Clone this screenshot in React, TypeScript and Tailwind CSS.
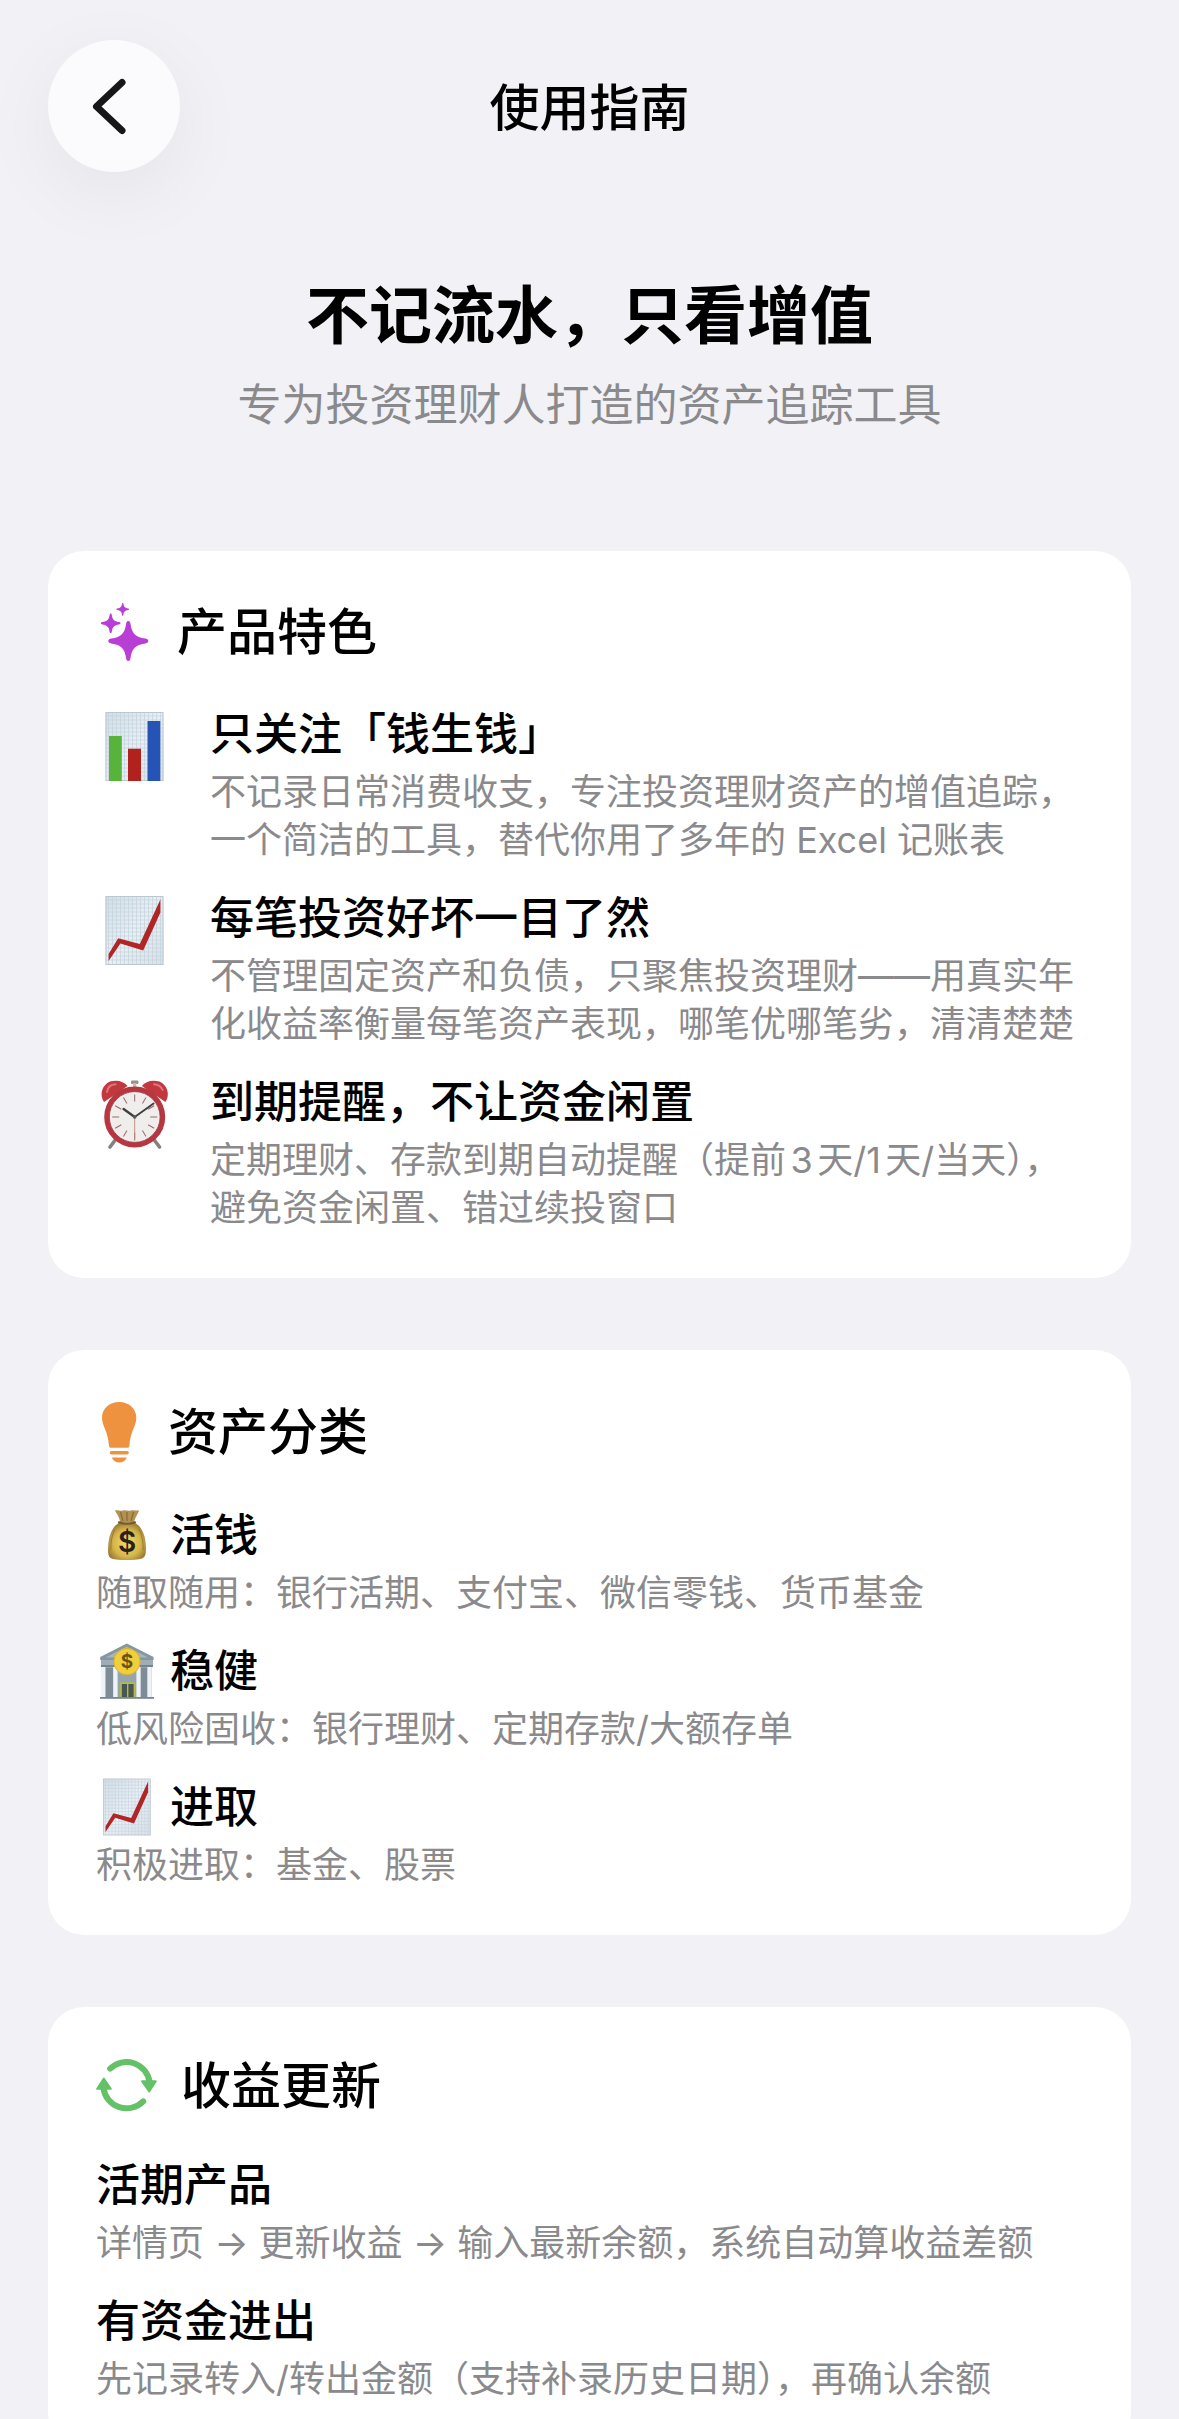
import type { ReactNode } from "react";

interface Feature {
  icon: ReactNode;
  title: string;
  desc: string;
}

interface Entry {
  icon?: ReactNode;
  title: string;
  desc: string;
}

const STAR =
  "M0 -20C1.6 -20 2 -18.6 2.2 -17C3.6 -7.5 7 -4 17 -2.4C18.6 -2.1 20 -1.6 20 0C20 1.6 18.6 2.1 17 2.4C7 4 3.6 7.5 2.2 17C2 18.6 1.6 20 0 20C-1.6 20 -2 18.6 -2.2 17C-3.6 7.5 -7 4 -17 2.4C-18.6 2.1 -20 1.6 -20 0C-20 -1.6 -18.6 -2.1 -17 -2.4C-7 -4 -3.6 -7.5 -2.2 -17C-2 -18.6 -1.6 -20 0 -20Z";

const TICKS = [0, 30, 60, 90, 120, 150, 180, 210, 240, 270, 300, 330];

function SparklesIcon() {
  return (
    <svg className="h-[66px] w-[57px] shrink-0" viewBox="0 0 57 66" fill="#b93ed6" aria-hidden="true">
      <path d={STAR} transform="translate(32.3 42)" />
      <path d={STAR} transform="translate(14.7 24.3) scale(.49)" />
      <path d={STAR} transform="translate(26.7 10.3) scale(.32)" />
    </svg>
  );
}

function BulbIcon() {
  return (
    <svg className="h-[68px] w-12 shrink-0" viewBox="0 0 48 68" fill="#ee9240" aria-hidden="true">
      <path d="M23.2 4C33 4 40.3 10.6 40.3 20C40.3 28 34.6 32.5 33.4 47.5C33.3 49 32.7 49.8 31.2 49.8H15.2C13.7 49.8 13.1 49 13 47.5C11.8 32.5 6 28 6 20C6 10.6 13.4 4 23.2 4Z" />
      <rect x="13.8" y="53" width="19" height="3.4" rx="1.6" />
      <path d="M15.8 59.4H30.8C29.4 62.6 26.8 64.4 23.3 64.4C19.8 64.4 17.2 62.6 15.8 59.4Z" />
    </svg>
  );
}

function RefreshIcon() {
  return (
    <svg className="h-[61px] w-[61px] shrink-0" viewBox="0 0 61 61" fill="none" aria-hidden="true">
      <g stroke="#65c168" strokeWidth="6" strokeLinecap="round">
        <path d="M14.2 13.6A23.4 23.4 0 0 1 53.6 27" />
        <path d="M47.2 46.4A23.4 23.4 0 0 1 7.4 33" />
      </g>
      <g fill="#65c168" stroke="#65c168" strokeWidth="2" strokeLinejoin="round">
        <path d="M46 26.2H59.8L53.2 36.4Z" />
        <path d="M1.2 33.8H14.8L7.8 23.6Z" />
      </g>
    </svg>
  );
}

function ChartPaper() {
  return (
    <>
      <defs>
        <linearGradient id="paper" x1="0" y1="0" x2="1" y2="1">
          <stop offset="0" stopColor="#d3dee6" />
          <stop offset=".5" stopColor="#e9f0f5" />
          <stop offset="1" stopColor="#d9e1e8" />
        </linearGradient>
      </defs>
      <rect x="9.5" y="8" width="58" height="69" fill="url(#paper)" />
      <path
        d="M12.5 8V77M16.5 8V77M20.5 8V77M24.5 8V77M28.5 8V77M32.5 8V77M36.5 8V77M40.5 8V77M44.5 8V77M48.5 8V77M52.5 8V77M56.5 8V77M60.5 8V77M64.5 8V77M9.5 12H67.5M9.5 16H67.5M9.5 20H67.5M9.5 24H67.5M9.5 28H67.5M9.5 32H67.5M9.5 36H67.5M9.5 40H67.5M9.5 44H67.5M9.5 48H67.5M9.5 52H67.5M9.5 56H67.5M9.5 60H67.5M9.5 64H67.5M9.5 68H67.5M9.5 72H67.5"
        stroke="#c3d2dd"
        strokeWidth=".7"
      />
      <rect x="10" y="8.5" width="57" height="68" fill="none" stroke="#bcc8d0" />
    </>
  );
}

function BarsEmoji() {
  return (
    <svg className="h-[78px] w-[78px]" viewBox="0 0 78 78" aria-hidden="true">
      <ChartPaper />
      <rect x="13" y="32" width="12.8" height="45" fill="#57b33b" />
      <rect x="32" y="44.7" width="13" height="32.3" fill="#b1211d" />
      <rect x="51.5" y="17" width="12.8" height="60" fill="#2554b6" />
    </svg>
  );
}

function TrendEmoji({ small = false }: { small?: boolean }) {
  return (
    <svg
      className={small ? "h-[60px] w-[60px]" : "h-[78px] w-[78px]"}
      viewBox={small ? "1 6 73 73" : "0 0 78 78"}
      aria-hidden="true"
    >
      <ChartPaper />
      <path d="M12.6 66V73L24.4 55.6L47.2 62.6L64.4 24.5V11.5L43.8 56L22.2 50.2Z" fill="#b12624" />
    </svg>
  );
}

function ClockEmoji() {
  return (
    <svg className="h-[78px] w-[78px]" viewBox="0 0 78 78" aria-hidden="true">
      <g stroke="#85807f" strokeWidth="3.6" strokeLinecap="round">
        <path d="M20 67L14 75" />
        <path d="M57.5 67L63.5 75" />
      </g>
      <path d="M8 30C3 23 6 13 14 9.6C21 7.4 28 9.4 31.5 14Z" fill="#c2383f" />
      <path d="M69.4 30C74.4 23 71.4 13 63.4 9.6C56.4 7.4 49.4 9.4 45.9 14Z" fill="#c2383f" />
      <path d="M11 20C11.6 15 15 12.4 19.6 12.2" stroke="#e0747a" strokeWidth="2" fill="none" strokeLinecap="round" />
      <path d="M58 12.2C62.6 12.4 65 14 66.6 18" stroke="#e0747a" strokeWidth="2" fill="none" strokeLinecap="round" />
      <rect x="35" y="8.6" width="7.4" height="3.4" rx="1" fill="#9a8f8c" />
      <rect x="37" y="11" width="3.4" height="5" fill="#c9bcb8" />
      <circle cx="38.7" cy="45" r="28" fill="#f0eeec" stroke="#b73640" strokeWidth="5" />
      <circle cx="38.7" cy="45" r="25.4" fill="none" stroke="#93303a" strokeWidth=".8" />
      <g stroke="#9b6a68" strokeWidth="1">
        {TICKS.map((deg) => (
          <path key={deg} d="M38.7 22.5V29.5" transform={`rotate(${deg} 38.7 45)`} />
        ))}
      </g>
      <path d="M38.7 45V69" stroke="#b98a78" strokeWidth=".9" />
      <path d="M38.7 45L27.6 37" stroke="#3d4240" strokeWidth="2.4" strokeLinecap="round" />
      <path d="M38.7 45L57.6 31.4" stroke="#3d4240" strokeWidth="1.9" strokeLinecap="round" />
      <circle cx="38.7" cy="45" r="1.8" fill="#5b5a58" />
    </svg>
  );
}

function MoneyBagEmoji() {
  return (
    <svg className="h-[60px] w-[60px]" viewBox="0 0 60 60" aria-hidden="true">
      <defs>
        <radialGradient id="bag" cx=".5" cy=".55" r=".6">
          <stop offset="0" stopColor="#f2dc68" />
          <stop offset=".6" stopColor="#d6b64a" />
          <stop offset="1" stopColor="#8d7030" />
        </radialGradient>
      </defs>
      <path d="M19 5.6C22 4.6 24 6.4 27 5.4C30 4.6 32 6.2 35 5.4C38 4.6 40.5 6 43.2 5.2C42 9 39 12 38 17H24C23.5 12 21 9.5 19 5.6Z" fill="#b3924f" />
      <path d="M24.5 7L27 16M31 7V16M37.5 7L35 16" stroke="#866a38" strokeWidth="1.2" />
      <path d="M24 17.5H38C46 21 49.6 31 49.9 42C50.1 49.5 49 52.4 46 53.6C38 55.6 23 55.6 15.6 53.6C12.6 52.4 11.8 49 12.1 42C12.6 31 16 21 24 17.5Z" fill="url(#bag)" />
      <path d="M19 24C16 30 14.6 37 14.8 45M43 24C46 30 47.2 37 47.2 45" stroke="#9a7d38" strokeWidth="1" fill="none" />
      <path d="M23 17.4C28 19 34 19 39 17.4" stroke="#7a5a2b" strokeWidth="2.2" fill="none" strokeLinecap="round" />
      <text x="31" y="47" textAnchor="middle" className="font-[Inter] text-[28px] font-semibold" fill="#2b2119">
        $
      </text>
    </svg>
  );
}

function BankEmoji() {
  return (
    <svg className="h-[60px] w-[60px]" viewBox="0 0 60 60" aria-hidden="true">
      <path d="M30.8 2.6L57.6 16V19H4.2V16Z" fill="#8797a1" />
      <path d="M30.8 5.6L52 16.4H9.6Z" fill="#a7b5bc" />
      <rect x="5" y="19" width="52" height="6.4" fill="#9fadb6" />
      <rect x="5" y="24" width="52" height="2" fill="#75848e" />
      <rect x="6" y="26" width="50" height="31" fill="#96a4ae" />
      <rect x="9.5" y="27" width="7.6" height="29" fill="#7d8c96" />
      <rect x="44.6" y="27" width="6.6" height="29" fill="#7d8c96" />
      <g fill="#eef3f8">
        <rect x="5.2" y="26" width="4.2" height="30" />
        <rect x="17.2" y="26" width="4.4" height="30" />
        <rect x="40.4" y="26" width="4.2" height="30" />
        <rect x="51.4" y="26" width="4.4" height="30" />
      </g>
      <rect x="24.2" y="41.4" width="15" height="15" fill="#b9bb45" />
      <rect x="25.8" y="43" width="5.2" height="13.4" fill="#4a5650" />
      <rect x="32.4" y="43" width="5.2" height="13.4" fill="#4a5650" />
      <rect x="4" y="56" width="54" height="1.8" fill="#7b8790" />
      <circle cx="31" cy="20.6" r="13.2" fill="#f0cf3a" stroke="#d9b22e" />
      <text x="31" y="27.4" textAnchor="middle" className="font-[Inter] text-[19px] font-bold" fill="#6a5418">
        $
      </text>
    </svg>
  );
}

const FEATURES: Feature[] = [
  {
    icon: <BarsEmoji />,
    title: "只关注「钱生钱」",
    desc: "不记录日常消费收支，专注投资理财资产的增值追踪，\n一个简洁的工具，替代你用了多年的 Excel 记账表",
  },
  {
    icon: <TrendEmoji />,
    title: "每笔投资好坏一目了然",
    desc: "不管理固定资产和负债，只聚焦投资理财——用真实年化收益率衡量每笔资产表现，哪笔优哪笔劣，清清楚楚",
  },
  {
    icon: <ClockEmoji />,
    title: "到期提醒，不让资金闲置",
    desc: "定期理财、存款到期自动提醒（提前3天/1天/当天），\n避免资金闲置、错过续投窗口",
  },
];

const CATEGORIES: Entry[] = [
  { icon: <MoneyBagEmoji />, title: "活钱", desc: "随取随用：银行活期、支付宝、微信零钱、货币基金" },
  { icon: <BankEmoji />, title: "稳健", desc: "低风险固收：银行理财、定期存款/大额存单" },
  { icon: <TrendEmoji small />, title: "进取", desc: "积极进取：基金、股票" },
];

const UPDATES: Entry[] = [
  { title: "活期产品", desc: "详情页 → 更新收益 → 输入最新余额，系统自动算收益差额" },
  { title: "有资金进出", desc: "先记录转入/转出金额（支持补录历史日期），再确认余额" },
];

function Card({ icon, title, children }: { icon: ReactNode; title: string; children: ReactNode }) {
  return (
    <section className="rounded-[36px] bg-white px-12 pt-12 pb-[46px]">
      <div className="mb-[39px] flex items-center gap-6">
        {icon}
        <h2 className="text-[50px] leading-[60px] font-medium">{title}</h2>
      </div>
      <div className="flex flex-col gap-6">{children}</div>
    </section>
  );
}

function EntryText({ icon, title, desc }: Entry) {
  return (
    <div className="flex flex-col gap-1">
      <h3 className="flex items-center gap-[14px] text-[44px] leading-[60px] font-medium">
        {icon}
        {title}
      </h3>
      <p className="text-[36px] leading-[48px] whitespace-pre-line text-[#8a8a8d]">{desc}</p>
    </div>
  );
}

export default function App() {
  return (
    <div
      lang="zh-CN"
      className="min-h-screen bg-[#f1f1f6] px-12 pt-10 pb-12 font-[Inter,'Noto_Sans_CJK_SC',sans-serif] text-black [text-autospace:normal]"
    >
      <header className="flex items-center">
        <button
          type="button"
          aria-label="返回"
          className="flex size-[132px] items-center justify-center rounded-full bg-[#fbfbfe] shadow-[0_20px_80px_rgba(0,0,0,0.06)]"
        >
          <svg className="size-[66px]" viewBox="0 0 66 66" fill="none" aria-hidden="true">
            <path d="M41 9.5L15.5 33.5L41 57.5" stroke="#17171a" strokeWidth="7" strokeLinecap="round" strokeLinejoin="round" />
          </svg>
        </button>
        <h1 className="flex-1 pt-1 text-center text-[50px] leading-[60px] font-medium">使用指南</h1>
        <div className="w-[132px]" />
      </header>

      <main>
        <div className="mt-[105px] mb-[118px] flex flex-col gap-6 text-center">
          <p className="text-[63px] leading-[76px] font-bold">不记流水，只看增值</p>
          <p className="text-[44px] leading-[56px] text-[#8a8a8d]">专为投资理财人打造的资产追踪工具</p>
        </div>

        <div className="flex flex-col gap-[72px]">
          <Card icon={<SparklesIcon />} title="产品特色">
            {FEATURES.map((f) => (
              <div key={f.title} className="flex gap-9">
                <div className="shrink-0">{f.icon}</div>
                <EntryText title={f.title} desc={f.desc} />
              </div>
            ))}
          </Card>

          <Card icon={<BulbIcon />} title="资产分类">
            {CATEGORIES.map((c) => (
              <EntryText key={c.title} {...c} />
            ))}
          </Card>

          <Card icon={<RefreshIcon />} title="收益更新">
            {UPDATES.map((u) => (
              <EntryText key={u.title} {...u} />
            ))}
          </Card>
        </div>
      </main>
    </div>
  );
}
